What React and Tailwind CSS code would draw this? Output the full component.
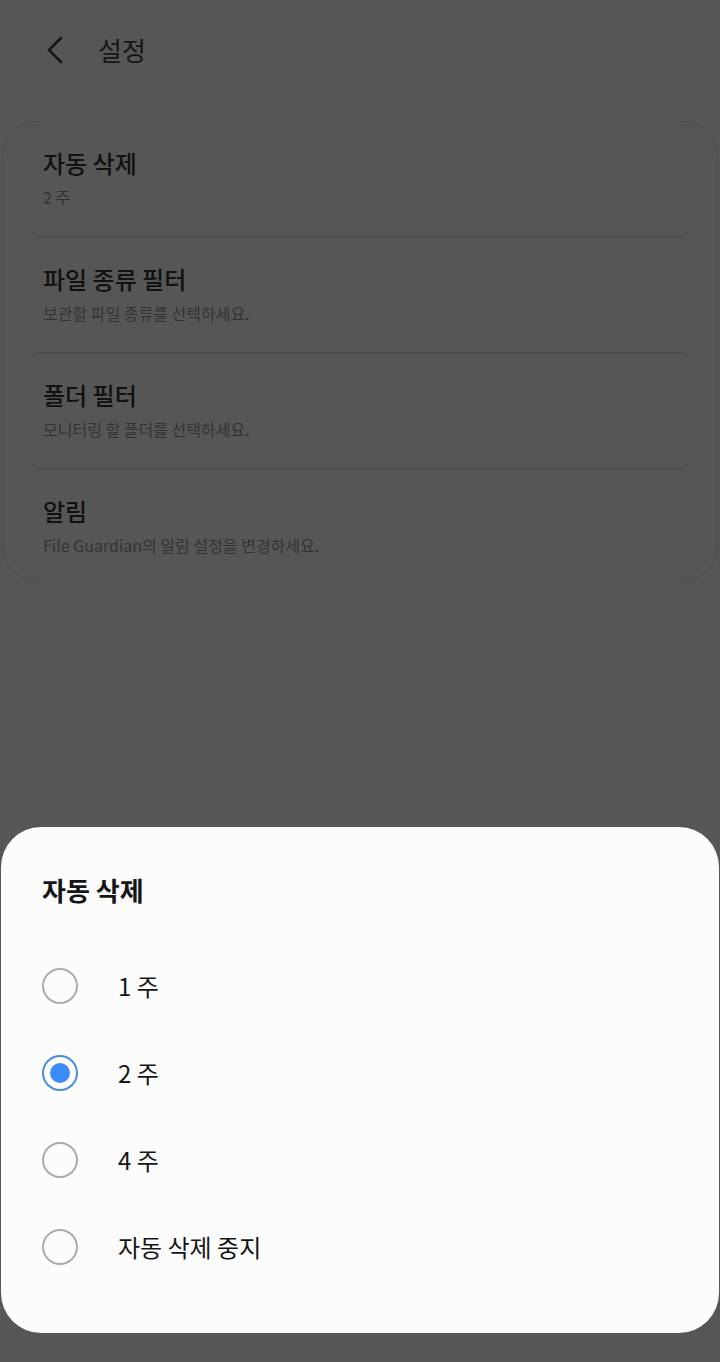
import React from 'react';

const font = { fontFamily: '"Noto Sans CJK KR", "Noto Sans", sans-serif' };

const settings = [
  { id: 'auto', title: '자동 삭제', sub: '2 주' },
  { id: 'types', title: '파일 종류 필터', sub: '보관할 파일 종류를 선택하세요.' },
  { id: 'folders', title: '폴더 필터', sub: '모니터링 할 폴더를 선택하세요.' },
  { id: 'alerts', title: '알림', sub: 'File Guardian의 알림 설정을 변경하세요.' },
];

const options = ['1 주', '2 주', '4 주', '자동 삭제 중지'];

const Radio = ({ checked }) =>
  checked ? (
    <div className="w-[36px] h-[36px] rounded-full border-2 border-[#4b8de3] flex items-center justify-center">
      <div className="w-[20px] h-[20px] rounded-full bg-[#3e8cf9]" />
    </div>
  ) : (
    <div className="w-[36px] h-[36px] rounded-full border-2 border-[#acacac]" />
  );

export default function App() {
  const selected = '2 주';

  return (
    <div className="w-[720px] h-[1362px] bg-[#565656] flex flex-col overflow-hidden" style={font}>
      {/* Header */}
      <div className="h-[100px] flex items-center pl-[44px]">
        <svg width="22" height="30" viewBox="0 0 22 30" fill="none">
          <path d="M17 3 L5 15 L17 27" stroke="#161616" strokeWidth="2.6" strokeLinecap="round" strokeLinejoin="round" />
        </svg>
        <span className="ml-[32px] text-[26px] leading-[30px] text-[#161616]">설정</span>
      </div>

      {/* Settings card (dimmed) */}
      <div className="mt-[21px] mx-[2px] rounded-[36px] border border-[#4e4e4e] px-[33px]">
        {settings.map((s, i) => (
          <div
            key={s.id}
            className={`px-[7px] pt-[26px] ${i < settings.length - 1 ? 'pb-[28px] border-b-2 border-[#4d4d4d]' : 'pb-[25px]'}`}
          >
            <div className="text-[24px] leading-[30px] font-medium text-[#111111]">{s.title}</div>
            <div className="mt-[8px] text-[16px] leading-[22px] text-[#333333]">{s.sub}</div>
          </div>
        ))}
      </div>

      <div className="flex-1" />

      {/* Bottom sheet */}
      <div className="mx-[1px] mb-[29px] h-[506px] rounded-[40px] bg-[#fcfcfc] pt-[48px] px-[41px]">
        <div className="text-[26px] leading-[30px] font-bold text-[#161616]">자동 삭제</div>
        <div className="mt-[37px] flex flex-col">
          {options.map((o) => (
            <div key={o} className="h-[87px] flex items-center">
              <Radio checked={o === selected} />
              <span className="ml-[40px] text-[24px] leading-[30px] text-[#161616]">{o}</span>
            </div>
          ))}
        </div>
      </div>
    </div>
  );
}
